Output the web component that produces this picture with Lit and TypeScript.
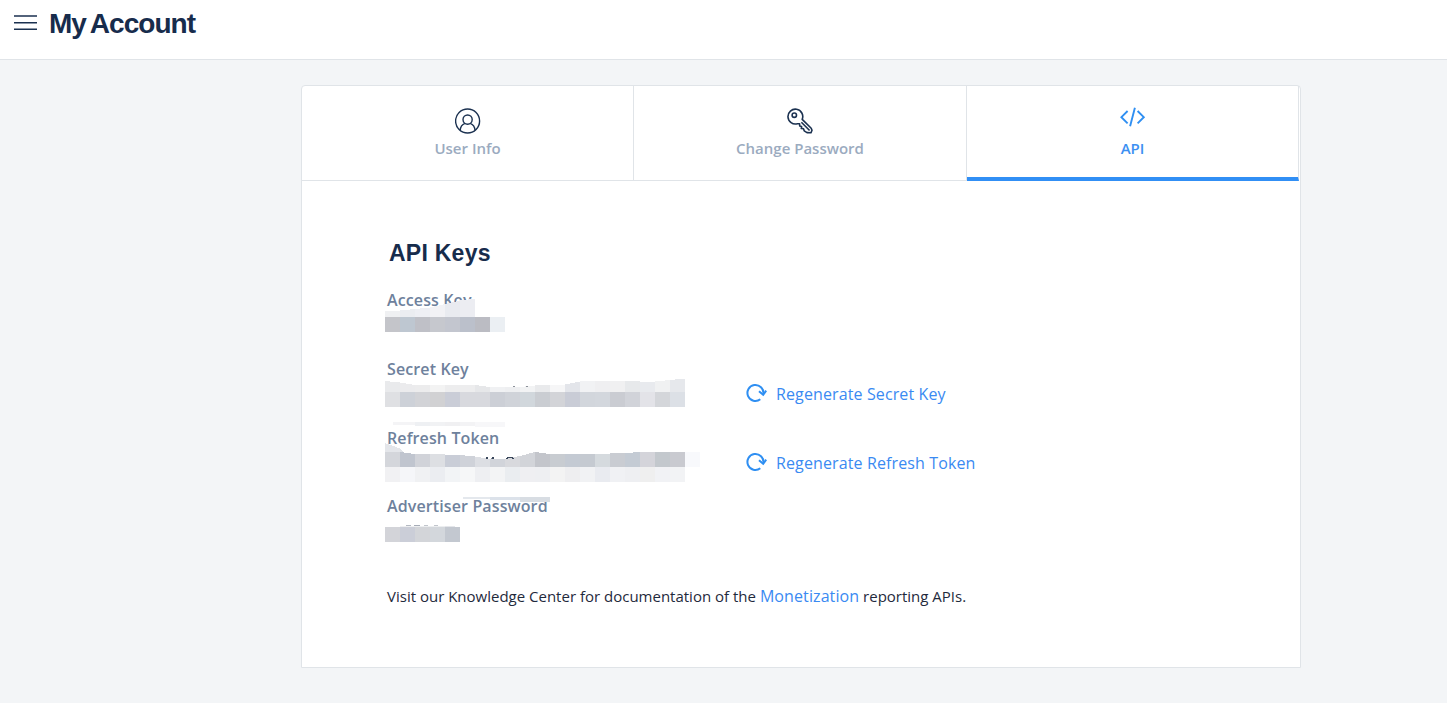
import { LitElement, html, svg, css, nothing } from "lit";
import { customElement, property, state } from "lit/decorators.js";

// A tile of the redaction mosaic: left, width, top-left y, top-right y, bottom y, fill.
type Tile = [number, number, number, number, number, string];

// A row of equal 15px tiles; tops lists the y of every tile edge.
const row = (x: number, tops: number[], bottom: number, fills: string[]): Tile[] =>
  fills.map((f, i) => [x + i * 15, 15, tops[i] ?? tops[0], tops[i + 1] ?? tops[0], bottom, f]);

interface Field {
  label: string;
  action?: string;
  tiles: Tile[];
  marks?: [number, number, number, number, string][];
}

// Tile coordinates are relative to the field's own top left corner.
const FIELDS: Field[] = [
  {
    label: "Access Key",
    tiles: [
      ...row(0, [21, 20.5, 19, 17.5, 14, 10.5, 8.5], 27, ["#eff0f2", "#ebedf1", "#eeeff4", "#f2f2f5", "#e9ebf0", "#ecedf2"]),
      ...row(0, [27], 42, ["#c4c5ca", "#bec7d1", "#bfc0c7", "#c6c8ce", "#c3c6cf", "#bbc0cb", "#bbbcc3", "#ebeff3"]),
    ],
  },
  {
    label: "Secret Key",
    action: "Regenerate Secret Key",
    tiles: [
      ...row(0, [22, 23.5, 26, 26.5, 26, 26, 26, 28, 28, 28, 26.5, 26, 25.5, 22.5, 22, 22, 22, 22.5, 22.5, 21, 19.5], 33,
        ["#e9eaec", "#ebebed", "#ececed", "#f3f3f3", "#ededee", "#ededee", "#e6e7e9", "#f0f1f3", "#eeeff1", "#f2f3f4", "#e9eaec", "#f6f6f7", "#e3e5ea", "#f1f2f4", "#efeff1", "#f0f0f1", "#e7e9eb", "#e8eaee", "#f0f1f2", "#e6e8ec"]),
      ...row(0, [33], 48,
        ["#dfe0e3", "#cdd1d8", "#d2d3d7", "#d1d1d3", "#cacdd7", "#d8d9de", "#d8d9de", "#cccfd6", "#d0d3d9", "#d1d7dc", "#cacdd2", "#d3d4d8", "#c9ccd6", "#d2d6dc", "#d3d7dd", "#caccd2", "#d1d3d9", "#e3e3e8", "#d4d6da", "#dce0e6"]),
    ],
    marks: [[128, 27, 2, 1, "#8b9099"], [141, 27, 2, 1, "#8b9099"]],
  },
  {
    label: "Refresh Token",
    action: "Regenerate Refresh Token",
    tiles: [
      [8, 22, -6, -6, -3, "#f4f4f6"],
      [30, 15, -6, -6, -2.5, "#eef0f3"],
      [45, 15, -6, -6, -2, "#f1f2f4"],
      [60, 15, -6, -6, -2, "#f0f0f2"],
      [75, 15, -6, -6, -2, "#f3f3f5"],
      [90, 30, -6, -6, -1, "#f7f7f9"],
      [0, 15, 15, 20.5, 24, "#e4e6ea"],
      [15, 3, 20.5, 24, 24, "#e0e3e8"],
      [0, 15, 24, 24, 39, "#d4d6db"],
      [15, 15, 24, 26, 39, "#c0c5cf"],
      ...row(30, [26, 26, 26.5, 27, 28.5, 31, 31, 28, 24], 39,
        ["#d1d3d9", "#dddfe3", "#c9cdd7", "#cfd2d9", "#dcdee3", "#d1d4da", "#d8d9dd", "#d2d4d9"]),
      ...row(150, [24, 26, 26, 26, 26.5, 25.5, 25, 24, 24, 24, 24], 39,
        ["#c3c5cb", "#c8ccd1", "#c4cad3", "#c5cad1", "#d5dade", "#c9ccd2", "#c4cbd4", "#d4d4da", "#c3c8cd", "#c9cad0", "#f8f9fc"]),
      ...row(0, [39], 54,
        ["#f1f1f3", "#f5f6f9", "#f0f1f3", "#ebedf1", "#f2f4f6", "#f6f7f8", "#eeeff2", "#f3f4f5", "#eaedf0", "#efeff2", "#eeeff2", "#f3f3f3", "#eeeef0", "#f1f2f4", "#e9ebf0", "#f0f1f4", "#eeeff2", "#efefef", "#f1f2f5", "#f2f3f5"]),
    ],
    marks: [[101, 29, 1.5, 2, "#39465a"], [107, 29, 2, 2, "#39465a"], [106, 30, 1, 1, "#7c8592"], [122, 29, 6, 1, "#39465a"], [121, 30, 2, 1, "#39465a"], [127, 30, 2, 1, "#39465a"]],
  },
  {
    label: "Advertiser Password",
    tiles: [
      [78, 27, 1, 1, 2.5, "#e4e8ed"],
      [105, 30, 1, 1, 4, "#dce2ea"],
      [135, 30, 1, 1, 6, "#d8dde3"],
      ...row(15, [30, 29.5, 29.5, 29.5, 31], 32, ["#eeeff1", "#eceef0", "#eceef0", "#e4e6ea"]),
      ...row(0, [31], 46, ["#d3d4d9", "#cbced8", "#d3d5d9", "#d3d7dc", "#c3c8d0"]),
    ],
    marks: [[21, 29, 5, 1, "#b4b9c2"], [29, 29, 6, 1, "#a7adb8"], [39, 29, 4, 1, "#c2c6cd"], [49, 29, 4, 1, "#c2c6cd"]],
  },
];

@customElement("key-field")
export class KeyField extends LitElement {
  @property({ attribute: false }) field!: Field;

  static styles = css`
    :host {
      display: flex;
      position: relative;
      height: 69px;
    }
    .label {
      width: 389px;
      box-sizing: border-box;
      padding-left: 2px;
      font-weight: 600;
      font-size: 16px;
      line-height: 20px;
      letter-spacing: 0.12px;
      color: #6e819c;
    }
    .mosaic {
      position: absolute;
      left: 0;
      top: 0;
      overflow: visible;
    }
    .action {
      display: flex;
      align-items: center;
      gap: 9px;
      height: 24px;
      margin: 23px 0 0 -28px;
      font-size: 16px;
      line-height: 24px;
      letter-spacing: 0.12px;
      color: #3a8af2;
      text-decoration: none;
      white-space: nowrap;
    }
    .action svg {
      margin-top: -2px;
    }
  `;

  render() {
    const { label, action, tiles, marks = [] } = this.field;
    return html`
      <div class="label">${label}</div>
      ${action
        ? html`<a class="action">
            <svg width="21" height="20" viewBox="0 0 21 20" fill="none" stroke="#2f8ff2" stroke-width="2">
              <path d="M14.3 16.3A8 8 0 1 1 17.4 10.8" />
              <path d="M13 8.2l4.2 3.6 3-4.2" />
            </svg>
            <span>${action}</span>
          </a>`
        : nothing}
      <svg class="mosaic" width="316" height="56" aria-hidden="true" shape-rendering="crispEdges">
        ${tiles.map(([x, w, a, b, c, f]) => svg`<path d="M${x} ${a}L${x + w} ${b}V${c}H${x}Z" fill=${f} />`)}
        ${marks.map(([x, y, w, h, f]) => svg`<rect x=${x} y=${y} width=${w} height=${h} fill=${f} />`)}
      </svg>
    `;
  }
}

const ICONS = {
  user: html`<svg width="26" height="26" viewBox="0 0 26 26" fill="none" stroke="#1b3150" stroke-width="1.4">
    <circle cx="12.6" cy="13" r="12" />
    <circle cx="12.6" cy="11.6" r="4.6" />
    <path d="M5.2 22.3C5.4 18.9 7.2 16.3 10 15.3M20 22.3C19.8 18.9 18 16.3 15.2 15.3" />
  </svg>`,
  key: html`<svg width="26" height="26" viewBox="0 0 26 26" fill="none" stroke="#1b3150" stroke-width="1.6" stroke-linejoin="round">
    <path d="M15.2 11.4A7.4 7.4 0 1 0 10.4 15.7L12.6 15.8 12.7 18 14.6 18.5 14.3 20.4 16.5 20.8 17.2 22.8 20 24.6 24 24.8 25 22.3 24.2 20.3Z" />
    <circle cx="7.3" cy="7.2" r="2.2" />
    <path d="M14.4 14.3L22.6 22.5" />
  </svg>`,
  code: html`<svg width="26" height="20" viewBox="0 0 26 20" fill="none" stroke="#2f8ff2" stroke-width="1.9">
    <path d="M7.6 4L1.4 10.2 7.6 16.4M17.6 4L23.8 10.2 17.6 16.4M14.9 .8L10.1 19.2" />
  </svg>`,
};

@customElement("app-root")
export class AppRoot extends LitElement {
  @state() private active = 2;

  static styles = css`
    :host {
      display: block;
      min-height: 703px;
      background: #f3f5f7;
      font-family: "Open Sans", "Noto Sans", sans-serif;
    }
    .header {
      display: flex;
      height: 59px;
      padding-left: 14px;
      border-bottom: 1px solid #e0e4e8;
      background: #fff;
    }
    .menu {
      margin-top: 15px;
    }
    .title {
      margin: 8px 0 0 12px;
      font: bold 28px/32px "Liberation Sans", sans-serif;
      letter-spacing: -0.95px;
      word-spacing: -2px;
      color: #172c4c;
    }
    .card {
      box-sizing: border-box;
      width: 1000px;
      height: 583px;
      margin: 25px 0 0 301px;
      border: 1px solid #e0e4e8;
      border-radius: 4px 4px 0 0;
      background: #fff;
    }
    .tabs {
      display: grid;
      grid-template-columns: 332px 333px 332px;
      height: 95px;
    }
    .tab {
      display: flex;
      flex-direction: column;
      align-items: center;
      justify-content: flex-end;
      box-sizing: border-box;
      padding-bottom: 22px;
      border-right: 1px solid #e0e4e8;
      border-bottom: 1px solid #e0e4e8;
      font-weight: 600;
      font-size: 15px;
      line-height: 20px;
      color: #9babc0;
    }
    .tab svg {
      margin-bottom: 4px;
    }
    .tab.active {
      border-bottom: 4px solid #318ff5;
      padding-bottom: 19px;
      color: #3c90f2;
    }
    .tab.active svg {
      margin-bottom: 11px;
    }
    .body {
      padding: 57px 0 0 83px;
    }
    .heading {
      margin: 0 0 22px 4px;
      font: bold 23px/30px "Liberation Sans", sans-serif;
      letter-spacing: 0.25px;
      color: #172c4c;
    }
    key-field:nth-of-type(n + 3) {
      height: 68px;
    }
    .note {
      margin: 21px 0 0 2px;
      font-size: 15px;
      line-height: 22px;
      color: #1f2a3c;
    }
    .link {
      font-size: 16px;
      letter-spacing: 0.1px;
      color: #3a8af2;
    }
  `;

  render() {
    const tabs = [
      { label: "User Info", icon: ICONS.user },
      { label: "Change Password", icon: ICONS.key },
      { label: "API", icon: ICONS.code },
    ];
    return html`
      <header class="header">
        <svg class="menu" width="23" height="16" viewBox="0 0 23 16" stroke="#1b3150" stroke-width="1.4">
          <path d="M0 1H23M0 7.7H23M0 14.3H23" />
        </svg>
        <h1 class="title">My Account</h1>
      </header>
      <main class="card">
        <nav class="tabs">
          ${tabs.map(
            (t, i) => html`<div class="tab ${i === this.active ? "active" : ""}" @click=${() => (this.active = i)}>
              ${t.icon}<span>${t.label}</span>
            </div>`
          )}
        </nav>
        <section class="body">
          <h2 class="heading">API Keys</h2>
          ${FIELDS.map((f) => html`<key-field .field=${f}></key-field>`)}
          <p class="note">
            Visit our Knowledge Center for documentation of the <a class="link">Monetization</a> reporting APIs.
          </p>
        </section>
      </main>
    `;
  }
}
